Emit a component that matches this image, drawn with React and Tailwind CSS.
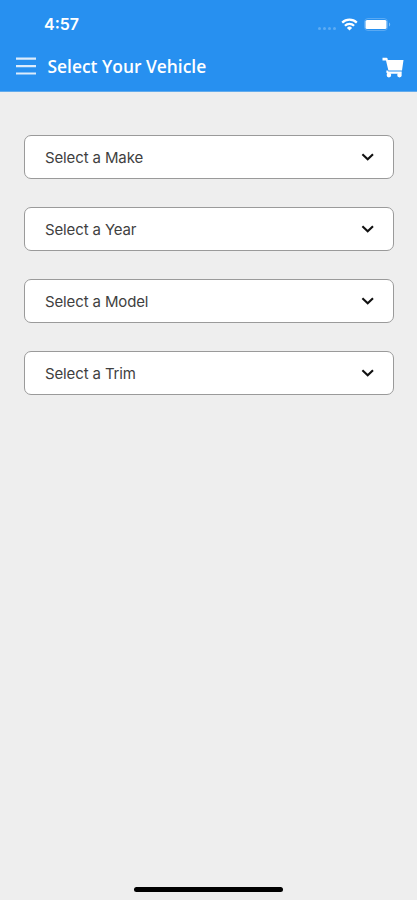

import { useState } from "react";

const FIELDS = ["Make", "Year", "Model", "Trim"];

export default function App() {
  const [openField, setOpenField] = useState(null);

  return (
    <div className="flex flex-col h-[900px] w-full bg-[#eeeeee] overflow-hidden">
      <header className="h-[92px] shrink-0 bg-[#2790f0] text-white border-b border-[#62abec]">
        <StatusBar />
        <NavBar title="Select Your Vehicle" />
      </header>

      <main className="flex-1 flex flex-col gap-7 pt-[43.4px] pl-6 pr-[23.5px]">
        {FIELDS.map((field) => (
          <SelectField
            key={field}
            label={`Select a ${field}`}
            open={openField === field}
            onClick={() => setOpenField(openField === field ? null : field)}
          />
        ))}
      </main>

      <div className="mx-auto mb-2 h-[5px] w-[149px] rounded-full bg-black" />
    </div>
  );
}

// ── Header ───────────────────────────────────────

function StatusBar() {
  return (
    <div className="flex items-center h-12 pl-11 pr-[26px]">
      <span className="font-['Inter',sans-serif] text-[16px] leading-5 font-semibold">4:57</span>
      <div className="ml-auto flex items-center">
        <SignalDots />
        <WifiIcon />
        <BatteryIcon />
      </div>
    </div>
  );
}

function NavBar({ title }) {
  return (
    <div className="flex items-center h-[38px] pl-4 pr-[13px]">
      <button aria-label="Menu">
        <MenuIcon />
      </button>
      <h1 className="ml-[11.5px] pb-[2px] font-['Open_Sans',sans-serif] text-[17.4px] leading-6 font-semibold whitespace-nowrap">
        {title}
      </h1>
      <button aria-label="Cart" className="ml-auto">
        <CartIcon />
      </button>
    </div>
  );
}

// ── Form ─────────────────────────────────────────

function SelectField({ label, open, onClick }) {
  return (
    <button
      aria-expanded={open}
      onClick={onClick}
      className="flex items-center justify-between h-11 w-full pl-5 pr-[18px] rounded-[7px] border border-[#9a9a9a] bg-white text-[#3f3f3f]"
    >
      <span className="pt-px font-['Inter',sans-serif] text-[15px] leading-5 tracking-[-0.13px]">{label}</span>
      <svg width="14" height="10" viewBox="0 0 14 10" fill="none" className="text-[#111111]">
        <path d="M1.4 2.2 6.7 7.200l5.300-5" stroke="currentColor" strokeWidth="2.1" />
      </svg>
    </button>
  );
}

// ── Icons ────────────────────────────────────────

function MenuIcon() {
  return (
    <svg width="20" height="20" viewBox="0 0 20 20" stroke="#dcecfc" strokeWidth="2.2">
      <path d="M0 1.700h20M0 9.100h20M0 16.500h20" />
    </svg>
  );
}

function SignalDots() {
  return (
    <div className="flex gap-[2px] mt-2 mr-[5px]">
      <span className="size-[3px] rounded-full bg-white/25" />
      <span className="size-[3px] rounded-full bg-white/25" />
      <span className="size-[3px] rounded-full bg-white/25" />
      <span className="size-[3px] rounded-full bg-white/25" />
    </div>
  );
}

function WifiIcon() {
  return (
    <svg width="17" height="13" viewBox="0 0 17 13" fill="none" stroke="currentColor" strokeWidth="2.2">
      <path d="M1.2 4.600a10.400 10.400 0 0 1 14.600 0" />
      <path d="M3.900 7.700a6.500 6.500 0 0 1 9.200 0" />
      <path d="M8.500 12.500 5.900 9.900a3.700 3.700 0 0 1 5.200 0z" fill="currentColor" stroke="none" />
    </svg>
  );
}

function BatteryIcon() {
  return (
    <svg width="27" height="13" viewBox="0 0 27 13" className="ml-[6px]">
      <rect x="0.5" y="0.5" width="23" height="12" rx="3.5" fill="none" stroke="#59a9f3" />
      <rect x="1.5" y="2" width="21" height="9" rx="1.5" fill="currentColor" />
      <path d="M25 4.500c1.600.6 1.600 3.400 0 4z" fill="#7fbdf7" />
    </svg>
  );
}

function CartIcon() {
  return (
    <svg width="22" height="21" viewBox="0 0 22 21" fill="currentColor">
      <path d="M.5.8h4c.6 0 1 .4 1.100 1l.2 1.200h15.700l-1.500 10.600H6.400L4 3.600H.5z" />
      <path d="M4.900 13c-1 1.400-.8 3.400.9 3.800h13.900v-2.400H6.500z" />
      <circle cx="6.900" cy="18.100" r="2.300" />
      <circle cx="17.500" cy="18.100" r="2.300" />
    </svg>
  );
}
